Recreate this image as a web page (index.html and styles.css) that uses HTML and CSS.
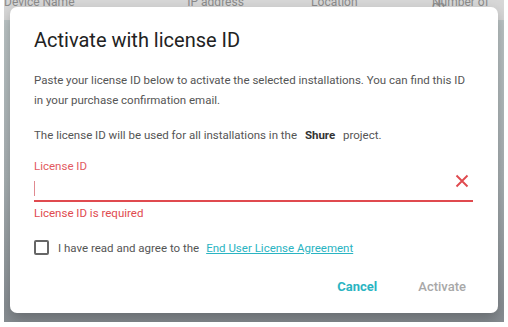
FILE: index.html
```html
<!DOCTYPE html>
<html>
<head>
<meta charset="utf-8">
<link rel="stylesheet" href="styles.css">
</head>
<body>
<div class="screen">
  <div class="page">
    <div class="table-head">
      <span class="col c1">Device Name</span>
      <span class="col c2">IP address</span>
      <span class="col c3">Location</span>
      <span class="col c4">Number of ch</span>
    </div>
    <div class="page-body"></div>
  </div>
  <div class="dialog">
    <h1 class="title">Activate with license ID</h1>
    <p class="text">Paste your license ID below to activate the selected installations. You can find this ID in your purchase confirmation email.</p>
    <p class="text second">The license ID will be used for all installations in the <b class="project">Shure</b> project.</p>
    <div class="field">
      <label class="label">License ID</label>
      <div class="input-row">
        <span class="caret"></span>
        <svg class="clear" width="14" height="14" viewBox="0 0 14 14"><path d="M1.5 1.5 L12.5 12.5 M12.5 1.5 L1.5 12.5" stroke="#e04a4f" stroke-width="1.9" fill="none"/></svg>
      </div>
      <div class="error">License ID is required</div>
    </div>
    <div class="agree">
      <span class="checkbox"></span>
      <span class="agree-text">I have read and agree to the</span>
      <a class="link">End User License Agreement</a>
    </div>
    <div class="actions">
      <span class="btn cancel">Cancel</span>
      <span class="btn activate">Activate</span>
    </div>
  </div>
</div>
</body>
</html>
```

FILE: styles.css
```css
html, body {
  margin: 0;
  padding: 0;
  background: #ffffff;
  font-family: Roboto, "Liberation Sans", sans-serif;
}
.screen {
  position: relative;
  width: 500px;
  height: 322px;
  margin: 0 4px;
  overflow: hidden;
}
.page {
  display: flex;
  flex-direction: column;
  height: 100%;
  background: linear-gradient(#bfc8c9 0%, #a9b1b4 55%, #878d92 100%);
}
.table-head {
  display: flex;
  height: 20px;
  background: #d7d7d7;
  font-size: 12px;
  color: #8a8a8a;
  line-height: 4px;
  align-items: flex-start;
}
.col { display: block; }
.c1 { margin-left: 0; width: 185px; }
.c2 { width: 125px; }
.c3 { width: 122px; }
.page-body { flex: 1; }
.dialog {
  position: absolute;
  left: 6px;
  top: 7px;
  width: 488px;
  height: 306px;
  box-sizing: border-box;
  background: #ffffff;
  border-radius: 7px;
  padding: 19px 24px 0 24px;
  box-shadow: 0 6px 14px rgba(0,0,0,0.25);
}
.title {
  margin: 0;
  font-size: 20px;
  font-weight: 400;
  color: #222222;
  line-height: 28px;
}
.text {
  margin: 16px 0 0 0;
  font-size: 11.5px;
  line-height: 20px;
  color: #555555;
}
.text.second { margin-top: 15px; }
.project { font-weight: 700; color: #333333; margin: 0 5px; }
.field {
  margin-top: 14px;
  margin-right: 1px;
}
.label {
  display: block;
  font-size: 11.5px;
  line-height: 14px;
  color: #e25a5f;
}
.input-row {
  display: flex;
  align-items: center;
  justify-content: space-between;
  height: 26px;
  border-bottom: 2px solid #e04a4f;
  padding-top: 1px;
}
.caret {
  display: block;
  width: 1px;
  height: 15px;
  background: #e08a90;
  margin-top: 3px;
}
.clear { margin-right: 4px; margin-top: -12px; }
.error {
  font-size: 11.5px;
  line-height: 14px;
  color: #e04a4f;
  margin-top: 4px;
}
.agree {
  display: flex;
  align-items: center;
  margin-top: 20px;
  font-size: 11.5px;
  color: #555555;
}
.checkbox {
  width: 11px;
  height: 11px;
  border: 2px solid #666666;
  border-radius: 2px;
  margin-right: 9px;
}
.agree-text { margin-right: 7px; }
.link {
  color: #2ab4c2;
  text-decoration: underline;
}
.actions {
  display: flex;
  justify-content: flex-end;
  align-items: center;
  margin-top: 24px;
  padding-right: 8px;
}
.btn {
  font-size: 13px;
  font-weight: 500;
}
.cancel { color: #2ab4c2; font-weight: 700; margin-right: 41px; }
.activate { color: #a8a8a8; }
```
